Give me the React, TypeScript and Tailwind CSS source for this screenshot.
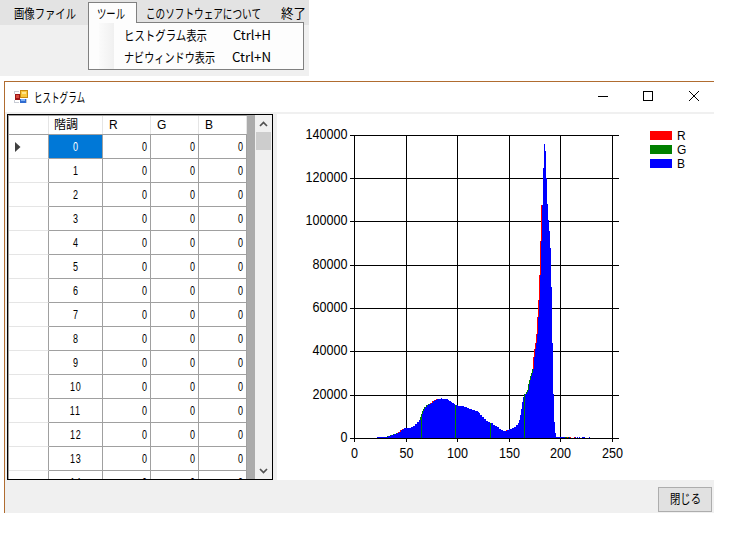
const JP = "font-['Noto_Sans_CJK_JP',sans-serif]";

// [x, top, edge colour]; only the step above the left neighbour shows the edge colour
type Step = [number, number, string?];

const STEPS: Step[] = [
  [377, 437], [387, 436, "g"], [390, 435, "g"], [393, 434, "g"], [396, 433, "g"],
  [398, 432, "r"], [400, 430, "r"], [402, 429, "r"], [404, 428], [411, 427], [413, 426],
  [415, 424], [417, 422], [419, 420], [420, 417, "g"], [421, 414, "g"], [422, 411, "g"],
  [423, 409, "g"], [424, 407, "g"], [426, 405, "g"], [428, 404, "g"], [430, 403, "r"],
  [432, 401, "r"], [434, 400, "r"], [436, 399, "r"], [441, 398], [442, 399], [448, 400],
  [449, 401], [451, 402], [452, 403], [454, 404], [455, 405], [458, 406], [464, 407],
  [467, 408], [469, 409], [472, 410], [475, 411], [478, 412], [479, 413], [480, 415],
  [482, 417], [484, 419], [486, 421], [488, 422], [490, 423], [493, 425], [495, 426],
  [497, 427], [499, 429], [501, 430], [503, 431], [506, 430, "r"], [509, 429], [512, 428],
  [514, 427], [516, 425], [518, 423], [519, 420], [520, 415], [521, 409], [522, 402],
  [523, 397], [524, 394], [526, 392, "g"], [527, 390, "g"], [528, 384, "g"], [529, 380, "g"],
  [530, 376, "g"], [531, 373, "g"], [532, 369, "g"], [533, 357, "r"], [534, 349, "r"],
  [535, 343, "r"], [536, 334, "r"], [537, 317, "r"], [538, 300, "r"], [539, 275, "r"],
  [540, 241, "r"], [541, 205, "r"], [543, 168], [544, 144], [545, 151], [546, 178],
  [547, 204], [548, 220], [549, 231], [550, 248], [551, 287], [552, 343], [553, 394],
  [554, 422], [555, 433], [556, 437],
];

const X_TICKS = [354, 406, 457, 509, 560, 612];
const Y_TICKS = [438, 395, 351, 308, 265, 221, 178, 135];

const MenuStrip = () => (
  <div className="relative h-[76px] w-[309px] bg-[#f0f0f0]">
    <div className="flex h-[25px] items-center bg-[#e3e3e3] pl-[14px]">
      <MenuText text="画像ファイル" width={62} />
      <span className="w-[70px]" />
      <MenuText text="このソフトウェアについて" width={115} />
      <span className="w-[20px]" />
      <MenuText text="終了" width={25} />
    </div>
    <div className="absolute left-[88px] top-[22px] h-[48px] w-[216px] border border-[#808080] bg-[#fdfdfd]">
      <div className="flex h-full">
        <div className="ml-[10px] w-[15px] bg-linear-to-r from-[#fbfbfb] to-[#f0f0f0]" />
        <div className="flex flex-col pl-[10px] pt-px">
          <div className="flex h-[22px] items-center">
            <MenuText text="ヒストグラム表示" width={83} />
            <span className="w-[26px]" />
            <MenuText text="Ctrl+H" width={38} />
          </div>
          <div className="flex h-[22px] items-center">
            <MenuText text="ナビウィンドウ表示" width={91} />
            <span className="w-[17px]" />
            <MenuText text="Ctrl+N" width={39} />
          </div>
        </div>
      </div>
    </div>
    <div className="absolute left-[88px] top-[2px] flex h-[21px] w-[49px] items-center border border-b-0 border-[#808080] bg-[#fdfdfd] pl-[8px]">
      <MenuText text="ツール" width={28} />
    </div>
  </div>
);

const MenuText = ({ text, width }: { text: string; width: number }) => (
  <svg width={width} height="20" className="shrink-0 overflow-visible">
    <text
      x="0"
      y="15"
      textLength={width}
      lengthAdjust="spacingAndGlyphs"
      className={`${JP} text-[13px]`}
    >
      {text}
    </text>
  </svg>
);

const FormIcon = () => (
  <svg width="14" height="14" shapeRendering="crispEdges">
    <path d="M0.500 4V1.500H5M0.500 10V12.500H5M12.500 9V13" fill="none" stroke="#c8ccd4" />
    <path d="M6 0h8v8H6z" fill="#c98a10" />
    <path d="M7 1h6v6H7z" fill="#f9c83c" />
    <path d="M8 2h4v2H8z" fill="#ffe58c" />
    <path d="M1 4h5v6H1z" fill="#9c1616" />
    <path d="M2 5h3v3H2z" fill="#d9493c" />
    <path d="M6 9h6v4H6z" fill="#2f6bd0" />
    <path d="M7 9h4v2H7z" fill="#7db0f5" />
  </svg>
);

const TitleBar = () => (
  <div className="flex h-[30px] items-center bg-white pl-[9px]">
    <FormIcon />
    <span className="w-[6px]" />
    <MenuText text="ヒストグラム" width={51} />
    <svg width="130" height="30" className="ml-auto" fill="none" stroke="#000">
      <path d="M14 14.500h10M59.500 9.500h9v9h-9z" shapeRendering="crispEdges" />
      <path d="M105 9l10 10M115 9l-10 10" />
    </svg>
  </div>
);

const CellText = ({ text, className = "" }: { text: string; className?: string }) => (
  <span
    className={`inline-block scale-x-[0.75] font-['Liberation_Sans',sans-serif] text-[12px] leading-none tracking-[1px] ${className}`}
  >
    {text}
  </span>
);

const Grid = () => (
  <div className="flex h-[366px] w-[266px] shrink-0 overflow-hidden border border-black bg-[#ababab]">
    <div className="w-[239px] shrink-0 border-l border-t border-[#a0a0a0] bg-white">
      <div className={`flex h-[19px] border-b border-[#a0a0a0] ${JP} text-[12px] leading-[16px]`}>
        <div className="w-[40px] border-r border-[#e5e5e5]" />
        <div className="w-[54px] border-r border-[#e5e5e5] pl-[5px]">階調</div>
        {["R", "G", "B"].map((name) => (
          <div
            key={name}
            className="w-[48px] border-r border-[#e5e5e5] pl-[6px] font-['Liberation_Sans',sans-serif] leading-[19px]"
          >
            {name}
          </div>
        ))}
      </div>
      {Array.from({ length: 15 }, (_, i) => (
        <div key={i} className="flex h-[24px]">
          <div className="flex w-[40px] items-center border-b border-r border-b-[#e5e5e5] border-r-[#a0a0a0] pl-[6px]">
            {i === 0 && (
              <svg width="6" height="10">
                <path d="M0 0l5.500 5L0 10z" fill="#404040" />
              </svg>
            )}
          </div>
          <div
            className={`flex w-[54px] items-center justify-center border-b border-r border-[#a0a0a0] ${
              i === 0 ? "bg-[#0078d7] text-white" : ""
            }`}
          >
            <CellText text={String(i)} />
          </div>
          {["r", "g", "b"].map((key) => (
            <div
              key={key}
              className="flex w-[48px] items-center justify-end border-b border-r border-[#a0a0a0] pr-[2px]"
            >
              <CellText text="0" className="origin-right" />
            </div>
          ))}
        </div>
      ))}
    </div>
    <div className="ml-auto flex w-[17px] flex-col items-center bg-[#f0f0f0]">
      <svg width="17" height="17" fill="none" stroke="#505050" strokeWidth="1.7">
        <path d="M5 11l3.500-3.500L12 11" />
      </svg>
      <div className="h-[18px] w-[15px] bg-[#cdcdcd]" />
      <svg width="17" height="17" className="mt-auto" fill="none" stroke="#505050" strokeWidth="1.7">
        <path d="M5 7l3.500 3.500L12 7" />
      </svg>
    </div>
  </div>
);

const Chart = () => (
  <svg
    width="437"
    height="366"
    viewBox="277 114 437 366"
    className="bg-white font-['Liberation_Sans',sans-serif] text-[14px]"
  >
    <g shapeRendering="crispEdges">
      {X_TICKS.map((x) => (
        <rect key={x} x={x} y="135" width="1" height="307" />
      ))}
      {Y_TICKS.map((y) => (
        <rect key={y} x="350" y={y} width="269" height="1" />
      ))}
      {STEPS.map(([x, top, edge], i) => {
        const next = STEPS[i + 1]?.[0] ?? 563;
        const prevTop = STEPS[i - 1]?.[1] ?? 438;
        return (
          <g key={x}>
            <rect x={x} y={top} width={next - x} height={438 - top} fill="#0000ff" />
            {edge && (
              <rect
                x={x}
                y={top}
                width="1"
                height={Math.max(1, prevTop - top)}
                fill={edge === "r" ? "#ff0000" : "#008000"}
              />
            )}
          </g>
        );
      })}
      <path d="M421 414h1v24h-1zM455 405h1v33h-1zM490 423h1v15h-1zM524 394h1v44h-1z" fill="#008000" />
      <path d="M563 437h2v1h-2zM569 437h1v1h-1zM575 437h1v1h-1zM577 437h1v1h-1zM579 437h1v1h-1zM582 437h3v1h-3zM589 437h1v1h-1z" fill="#0000ff" />
      <path d="M565 437h2v1h-2zM568 437h1v1h-1z" fill="#008000" />
      <path d="M567 437h1v1h-1zM570 437h1v1h-1zM574 437h1v1h-1z" fill="#ff0000" />
      <path d="M650 131h22v9h-22z" fill="#ff0000" />
      <path d="M650 145h22v9h-22z" fill="#008000" />
      <path d="M650 159h22v9h-22z" fill="#0000ff" />
    </g>
    {Y_TICKS.map((y, i) => {
      const label = String(i * 20000);
      return (
        <text
          key={y}
          x="347.500"
          y={y + 4}
          textAnchor="end"
          textLength={label.length * 7}
          lengthAdjust="spacingAndGlyphs"
        >
          {label}
        </text>
      );
    })}
    {X_TICKS.map((x, i) => {
      const label = String(i * 50);
      return (
        <text
          key={x}
          x={x + 0.5}
          y="458"
          textAnchor="middle"
          textLength={label.length * 7}
          lengthAdjust="spacingAndGlyphs"
        >
          {label}
        </text>
      );
    })}
    {["R", "G", "B"].map((name, i) => (
      <text key={name} x="677" y={140 + i * 14} className="text-[12px]">
        {name}
      </text>
    ))}
  </svg>
);

export default function App() {
  return (
    <div className="h-[534px] w-[729px] overflow-hidden bg-white text-black">
      <MenuStrip />
      <div className="ml-[4px] mt-[5px] h-[432px] w-[710px] border-l border-t border-[#b06c30] bg-[#f0f0f0]">
        <TitleBar />
        <div className="mt-[2px] flex justify-between pl-[2px]">
          <Grid />
          <Chart />
        </div>
        <div className="flex justify-end pr-[2px] pt-[7px]">
          <button
            type="button"
            className="flex h-[25px] w-[54px] items-center justify-center border border-[#adadad] bg-[#e1e1e1] pb-[3px]"
          >
            <MenuText text="閉じる" width={31} />
          </button>
        </div>
      </div>
    </div>
  );
}
